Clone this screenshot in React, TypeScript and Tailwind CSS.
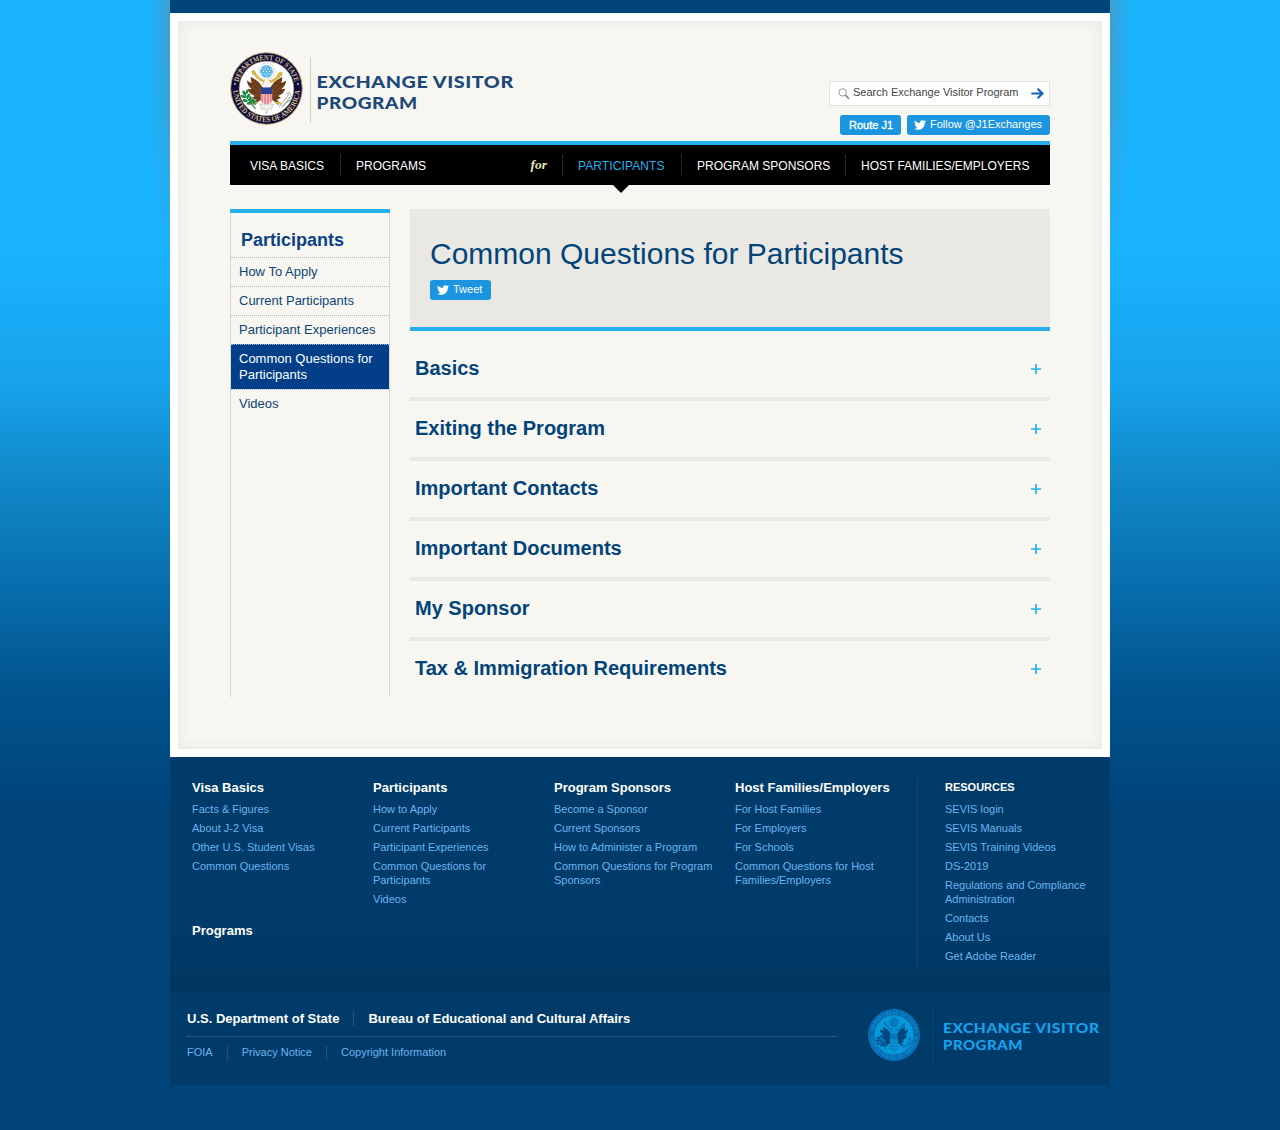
import React from "react";
import { FaTwitter } from "react-icons/fa";

const questions = [
  "Basics",
  "Exiting the Program",
  "Important Contacts",
  "Important Documents",
  "My Sponsor",
  "Tax & Immigration Requirements",
];

const footerColumns = [
  { title: "Visa Basics", links: ["Facts & Figures", "About J-2 Visa", "Other U.S. Student Visas", "Common Questions"] },
  {
    title: "Participants",
    links: ["How to Apply", "Current Participants", "Participant Experiences", "Common Questions for Participants", "Videos"],
  },
  {
    title: "Program Sponsors",
    links: ["Become a Sponsor", "Current Sponsors", "How to Administer a Program", "Common Questions for Program Sponsors"],
  },
  {
    title: "Host Families/Employers",
    links: ["For Host Families", "For Employers", "For Schools", "Common Questions for Host Families/Employers"],
  },
];

const resources = [
  "SEVIS login",
  "SEVIS Manuals",
  "SEVIS Training Videos",
  "DS-2019",
  "Regulations and Compliance Administration",
  "Contacts",
  "About Us",
  "Get Adobe Reader",
];

type SealColors = {
  ring: string;
  edge: string;
  letters: string;
  field: string;
  body: string;
  glory: string;
  gloryDots: string;
  chief: string;
  stripeA: string;
  stripeB: string;
  olive: string;
  arrows: string;
  scroll: string;
  head: string;
};

const fullColor: SealColors = {
  ring: "#0c0a45",
  edge: "#b9a66a",
  letters: "#d9c078",
  field: "#ffffff",
  body: "#6b3a1b",
  glory: "#5bb8e4",
  gloryDots: "#e6f6fd",
  chief: "#2f3f94",
  stripeA: "#ee7f86",
  stripeB: "#f6c9cb",
  olive: "#1c8a4a",
  arrows: "#8c9090",
  scroll: "#d8b648",
  head: "#f4f1ea",
};

const blueTone: SealColors = {
  ring: "#0669ab",
  edge: "#0c86cf",
  letters: "#0e90d8",
  field: "#089ade",
  body: "#03457c",
  glory: "#0674b8",
  gloryDots: "#0c9fe4",
  chief: "#0674b8",
  stripeA: "#089ade",
  stripeB: "#0674b8",
  olive: "#03528c",
  arrows: "#03528c",
  scroll: "#0674b8",
  head: "#0b8ed2",
};

function Seal({ size, colors: c, id }: { size: number; colors: SealColors; id: string }) {
  const wing =
    "M34.5 37 C32 36 31 32 28 29.5 C25 27.5 22.5 25.5 20.5 25 C21.5 27.5 20.5 29 22 31 C20 30.5 18.5 29.5 17 28.5 C17 32 19 35 21.5 37 C20 37.5 18.5 37 17.8 36.5 C18.5 40.5 22 43 25 44 C24 44.8 23 45 22 45 C25 49 31 49 33 47 L36 43 Z";
  return (
    <svg width={size} height={size} viewBox="0 0 73 73" className="block shrink-0">
      <defs>
        <path id={`${id}-top`} d="M7.9 36.5 A28.6 28.6 0 0 1 65.1 36.5" />
        <path id={`${id}-bottom`} d="M3 36.5 A33.5 33.5 0 0 0 70 36.5" />
      </defs>
      <circle cx="36.5" cy="36.5" r="35.8" fill={c.ring} stroke={c.edge} strokeWidth="0.9" />
      <circle cx="36.5" cy="36.5" r="27.3" fill={c.field} stroke={c.edge} strokeWidth="0.6" />
      <g fill={c.letters} fontFamily="Liberation Serif, serif" fontSize="7.6" fontWeight="700">
        <text textAnchor="middle">
          <textPath href={`#${id}-top`} startOffset="50%" textLength="77" lengthAdjust="spacingAndGlyphs">
            DEPARTMENT OF STATE
          </textPath>
        </text>
        <text textAnchor="middle">
          <textPath href={`#${id}-bottom`} startOffset="50%" textLength="101" lengthAdjust="spacingAndGlyphs">
            UNITED STATES OF AMERICA
          </textPath>
        </text>
      </g>
      <circle cx="5" cy="32" r="1.1" fill={c.letters} />
      <circle cx="68" cy="32" r="1.1" fill={c.letters} />
      <circle cx="36.5" cy="19.4" r="8.2" fill="none" stroke={c.arrows} strokeWidth="1" strokeDasharray="1.2 0.8" opacity="0.5" />
      <circle cx="36.5" cy="19.4" r="6.4" fill={c.glory} />
      <g fill={c.gloryDots}>
        {[
          [36.5, 19.4], [33.5, 19.4], [39.5, 19.4], [35, 16.8], [38, 16.8], [35, 22], [38, 22],
          [32, 16.8], [41, 16.8], [32, 22], [41, 22], [36.5, 14.6], [36.5, 24.2],
        ].map(([x, y], i) => (
          <circle key={i} cx={x} cy={y} r="0.65" />
        ))}
      </g>
      <path
        d="M35 31 C31 29.5 27 27.5 25 24 C22 22 20 19 23 18 C26 18 25.5 21 27.5 23 C29 26 32 27 35 28.5 M38 28.5 C42 28.5 45 26 47 23.5 C48 21 50 18.5 52.5 20.5 C53.5 23 50 25 48.5 26.5 C45 29.5 42 31.5 38 31"
        fill={c.scroll}
      />
      <path d={wing} fill={c.body} />
      <path d={wing} fill={c.body} transform="translate(73 0) scale(-1 1)" />
      <g stroke={c.scroll} strokeWidth="0.5" opacity="0.35" fill="none">
        <path d="M23 29 L31 39 M21 34 L31 43 M22 41 L31 45 M50 29 L42 39 M52 34 L42 43 M51 41 L42 45" />
      </g>
      <path d="M31.5 45 L26 50 L24.5 52 M41.5 45 L47 50 L49 52" stroke={c.body} strokeWidth="2.8" fill="none" />
      <path d="M22 51.5 l5.5 -1 M45.5 50.5 l5.5 1" stroke={c.scroll} strokeWidth="2.2" />
      <path d="M33 35 L33 31.5 C34 28.5 38 27.5 40 30 L40 35 Z" fill={c.head} />
      <path d="M33.2 30.6 L31.2 32 L33.6 32.4 Z" fill={c.scroll} />
      <path d="M30 52 L43 52 L41.5 57.5 L38.5 56.5 L36.5 62 L34.5 56.5 L31.5 57.5 Z" fill={c.head} stroke={c.arrows} strokeWidth="0.6" strokeDasharray="1.2 0.6" />
      <path d="M30.8 38 H42.2 V48 C42.2 51 39 52 36.5 53.2 C34 52 30.8 51 30.8 48 Z" fill={c.stripeB} />
      <path d="M32.3 42 V50 M35.1 42 V52 M37.9 42 V52 M40.7 42 V50" stroke={c.stripeA} strokeWidth="1.7" />
      <path d="M30.8 35.4 H42.2 V42 H30.8 Z" fill={c.chief} />
      <path d="M13.5 39 C15 45 20 49 25.5 57" stroke={c.olive} strokeWidth="1.1" fill="none" />
      <g fill={c.olive}>
        {[
          [14, 41, 60], [17, 39.8, 120], [13.2, 44.5, 20], [18.3, 43.8, 130], [15.2, 48.6, 10],
          [20.2, 46.6, 100], [19.3, 51.4, 0], [24, 50, 80], [22, 48.8, 120],
        ].map(([x, y, r], i) => (
          <ellipse key={i} cx={x} cy={y} rx="2.7" ry="1.4" transform={`rotate(${r} ${x} ${y})`} />
        ))}
      </g>
      <g stroke={c.arrows} strokeWidth="0.9" fill="none" opacity="0.85">
        <path d="M49 55 L59 42 M51 55.5 L60.5 45 M53 54 L60 48" />
        <path d="M56 42 l3.5 -1.5 l1 3 M58.5 46 l3 -1.5 M57 50 l4 -2.5" />
      </g>
    </svg>
  );
}

function SearchGlass() {
  return (
    <svg width="12" height="12" viewBox="0 0 12 12" className="block shrink-0" fill="none">
      <circle cx="4.6" cy="4.4" r="3.7" stroke="#8f8f8f" strokeWidth="0.9" />
      <path d="M7.4 7.2 L11 10.8" stroke="#8a8a8a" strokeWidth="1.9" />
    </svg>
  );
}

function ArrowRight() {
  return (
    <svg width="13" height="12" viewBox="0 0 13 12" className="block shrink-0" fill="none" stroke="#1763b8" strokeWidth="2.2">
      <path d="M0.3 5.5 H11.3 M6.6 0.7 L11.5 5.5 L6.6 10.3" />
    </svg>
  );
}

function FooterLinks({ links }: { links: string[] }) {
  return (
    <ul className="mt-[6px] flex flex-col gap-[5px] text-[11px] leading-[14px] text-[#6cb5ef]">
      {links.map((l) => (
        <li key={l}>{l}</li>
      ))}
    </ul>
  );
}

function NavDivider() {
  return <span className="h-5 w-0 border-l border-dotted border-[#4a4a4a]" />;
}

export default function App() {
  return (
    <div className="relative h-[1130px] w-[1280px] overflow-hidden bg-[linear-gradient(180deg,#1ab4ff_0px,#1ab4ff_240px,#17a3ec_382px,#1189c9_476px,#0870b0_577px,#02558f_685px,#00447a_807px,#00447a_1130px)] font-['Liberation_Sans',Arial,sans-serif]">
      <div className="absolute left-[150px] top-0 h-[243px] w-5 bg-[linear-gradient(268deg,rgb(82_148_184/0.65)_0%,rgb(82_148_184/0.2)_55%,transparent_90%)] [mask-image:linear-gradient(#000,#000_50%,rgb(0_0_0/0.25))]" />
      <div className="absolute left-[1110px] top-0 h-[243px] w-5 bg-[linear-gradient(92deg,rgb(82_148_184/0.65)_0%,rgb(82_148_184/0.2)_55%,transparent_90%)] [mask-image:linear-gradient(#000,#000_50%,rgb(0_0_0/0.25))]" />

      <div className="relative mx-auto w-[940px]">
        <div className="h-[13px] bg-[#00447a]" />

        <div className="h-[744px] border-8 border-white bg-[#f7f6f1]">
          <div className="h-[728px] px-[52px] shadow-[inset_0_0_14px_rgba(0,0,0,0.07)]">
            <header className="flex h-[120px] justify-between">
              <div className="flex pt-[31px]">
                <Seal size={73} colors={fullColor} id="seal" />
                <span className="ml-[7px] mt-[5px] h-[66px] w-px bg-[#cfcfca]" />
                <svg width="200" height="50" viewBox="0 0 200 50" className="ml-[5px] mt-[18px]" fill="#1b4878" fontFamily="Lato, sans-serif" fontWeight="900" fontSize="17.4" letterSpacing="0.5">
                  <text x="0.6" y="18" textLength="197.2" lengthAdjust="spacingAndGlyphs">EXCHANGE VISITOR</text>
                  <text x="0.6" y="39" textLength="101" lengthAdjust="spacingAndGlyphs">PROGRAM</text>
                </svg>
              </div>
              <div className="flex flex-col items-end pt-[60px]">
                <div className="flex h-[25px] w-[221px] items-center border border-[#e4e3df] bg-white pl-2 pr-[5px]">
                  <SearchGlass />
                  <span className="ml-[3px] flex-1 whitespace-nowrap pb-[3px] text-[11px] leading-[14px] text-[#444]">Search Exchange Visitor Program</span>
                  <ArrowRight />
                </div>
                <div className="mt-[9px] flex gap-[6px] text-[11px] text-white">
                  <span className="flex h-5 w-[61px] items-center justify-center rounded-[3px] bg-[#1b95e0] pl-[1px] font-medium [-webkit-text-stroke:0.35px_white]">Route J1</span>
                  <span className="flex h-5 w-[143px] items-center rounded-[3px] bg-[#1b95e0] pl-[7px]">
                    <FaTwitter size={12} />
                    <span className="ml-1 pb-[2px] leading-[14px]">Follow @J1Exchanges</span>
                  </span>
                </div>
              </div>
            </header>

            <nav className="relative flex h-11 items-center border-t-4 border-[#26b0f0] bg-black px-5 text-[12px] leading-4 text-white">
              <span className="w-[90px] pt-[2px]">VISA BASICS</span>
              <NavDivider />
              <span className="ml-[15px] pt-[2px]">PROGRAMS</span>
              <span className="ml-auto mr-[15px] font-['Liberation_Serif',serif] text-[13.5px] font-bold italic text-[#e9e4bd]">for</span>
              <NavDivider />
              <span className="ml-[15px] w-[103px] pt-[2px] text-[#26b0f0]">
                <span className="tracking-[0.1px]">PARTICIPANTS</span>
              </span>
              <NavDivider />
              <span className="ml-[15px] w-[148px] pt-[2px]">PROGRAM SPONSORS</span>
              <NavDivider />
              <span className="ml-[15px] w-[169px] whitespace-nowrap pt-[2px]">HOST FAMILIES/EMPLOYERS</span>
              <span className="absolute left-[383px] top-10 h-0 w-0 border-x-8 border-t-8 border-x-transparent border-t-black" />
            </nav>

            <div className="mt-6 flex gap-5">
              <aside className="h-[488px] w-40 border-t-4 border-[#26b0f0]">
                <div className="h-full border-x border-[#d6d6d2] text-[13px] leading-4 text-[#0d4474]">
                  <h2 className="h-11 pl-[10px] pt-[15px] text-[18px] font-bold leading-6 text-[#0b4283]">Participants</h2>
                  <div className="border-t border-dotted border-[#a9bcc8] px-2 py-[6px]">How To Apply</div>
                  <div className="border-t border-dotted border-[#a9bcc8] px-2 py-[6px]">Current Participants</div>
                  <div className="border-t border-dotted border-[#a9bcc8] px-2 py-[6px]">Participant Experiences</div>
                  <div className="border-t border-dotted border-[#a9bcc8] bg-[#023f88] px-2 py-[6px] text-white">Common Questions for Participants</div>
                  <div className="border-t border-dotted border-[#a9bcc8] px-2 py-[6px]">Videos</div>
                </div>
              </aside>

              <main className="w-[640px]">
                <div className="h-[122px] border-b-4 border-[#26b0f0] bg-[#e9e8e3] px-5 pt-[27px]">
                  <h1 className="text-[30px] leading-9 text-[#02447a]">Common Questions for Participants</h1>
                  <span className="mt-2 flex h-5 w-[61px] items-center rounded-[3px] bg-[#1b95e0] pl-[7px] text-[11px] text-white">
                    <FaTwitter size={12} />
                    <span className="ml-1 pb-[2px] leading-[14px]">Tweet</span>
                  </span>
                </div>
                <div className="mt-[10px]">
                  {questions.map((q) => (
                    <div key={q} className="flex h-[60px] items-center justify-between border-b-4 border-[#e9e8e3] pl-[5px] pr-[9px] last:h-14 last:border-b-0">
                      <h3 className="pb-[2px] text-[20px] font-bold leading-6 text-[#02447a]">{q}</h3>
                      <svg width="10" height="10" viewBox="0 0 10 10" stroke="#26b0f0" strokeWidth="1.7">
                        <path d="M5 0 V10 M0 5 H10" />
                      </svg>
                    </div>
                  ))}
                </div>
              </main>
            </div>
          </div>
        </div>

        <footer>
          <div className="flex h-[235px] bg-[linear-gradient(180deg,#003b69_0%,#003b69_75%,#003560_100%)] pl-[22px] pt-[22px]">
            <div className="w-[725px]">
              <div className="flex h-[127px]">
                {footerColumns.map((c) => (
                  <div key={c.title} className="w-[181px] pr-5">
                    <h4 className="whitespace-nowrap pt-[1px] text-[13px] font-bold leading-4 text-white">{c.title}</h4>
                    <FooterLinks links={c.links} />
                  </div>
                ))}
              </div>
              <h4 className="mt-[17px] text-[13px] font-bold leading-4 text-white">Programs</h4>
            </div>
            <div className="h-[190px] border-l border-dotted border-[#0f5688] pl-[27px]">
              <div className="w-[150px]">
                <h4 className="pb-[1px] text-[11px] font-bold leading-4 text-white">RESOURCES</h4>
                <FooterLinks links={resources} />
              </div>
            </div>
          </div>

          <div className="flex h-[93px] bg-[#003b69] pl-[17px]">
            <div className="w-[650px]">
              <div className="flex h-[45px] items-center border-b border-dotted border-[#3c6f97] pt-[9px] text-[13px] font-bold text-white">
                <span>U.S. Department of State</span>
                <span className="mx-[14px] h-[15px] w-px bg-[#0f5a94]" />
                <span>Bureau of Educational and Cultural Affairs</span>
              </div>
              <div className="mt-2 flex h-4 items-center text-[11px] leading-[14px] text-[#6cb5ef]">
                <span className="pb-[2px]">FOIA</span>
                <span className="mx-[14px] h-[14px] w-px bg-[#0f5a94]" />
                <span className="pb-[2px]">Privacy Notice</span>
                <span className="mx-[14px] h-[14px] w-px bg-[#0f5a94]" />
                <span className="pb-[2px]">Copyright Information</span>
              </div>
            </div>
            <div className="ml-[31px] flex pt-[17px]">
              <Seal size={52} colors={blueTone} id="footer-seal" />
              <span className="ml-3 h-14 border-l border-dotted border-[#0f5688]" />
              <svg width="160" height="40" viewBox="0 0 160 40" className="ml-[9px] mt-[10px]" fill="#18a3ee" fontFamily="Lato, sans-serif" fontWeight="900" fontSize="13.8" letterSpacing="0.5">
                <text x="1" y="14.4" textLength="156.5" lengthAdjust="spacingAndGlyphs">EXCHANGE VISITOR</text>
                <text x="1" y="31" textLength="80" lengthAdjust="spacingAndGlyphs">PROGRAM</text>
              </svg>
            </div>
          </div>
        </footer>
      </div>
    </div>
  );
}
